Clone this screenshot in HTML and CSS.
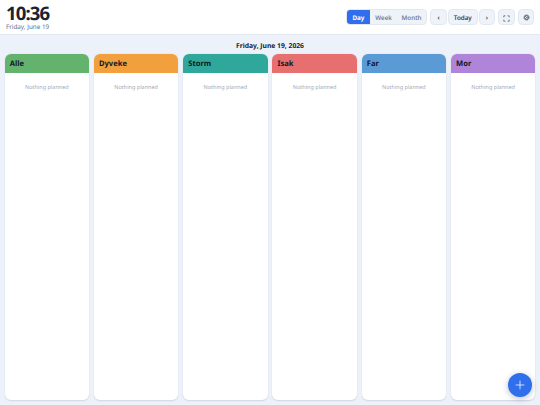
FILE: index.html
```html
<!DOCTYPE html>
<html lang="en">
<head>
<meta charset="utf-8">
<title>Family calendar</title>
<link rel="stylesheet" href="styles.css">
</head>
<body>
<header class="topbar">
  <div class="clock">
    <div class="time">10:36</div>
    <div class="date">Friday, June 19</div>
  </div>
  <div class="controls">
    <div class="segments">
      <button class="segment active">Day</button>
      <button class="segment week">Week</button>
      <button class="segment month">Month</button>
    </div>
    <div class="nav">
      <button class="btn arrow">‹</button>
      <button class="btn today">Today</button>
      <button class="btn arrow">›</button>
    </div>
    <button class="btn" aria-label="Full screen"><svg class="expand" viewBox="0 0 8 8"><path d="M.9 2.7V.9H2.7M5.3.9H7.1V2.7M7.1 5.3V7.1H5.3M2.7 7.1H.9V5.3"/></svg></button>
    <button class="btn" aria-label="Settings"><svg class="gear" viewBox="0 0 8 8"><circle class="teeth" cx="4" cy="4" r="3"/><circle class="ring" cx="4" cy="4" r="2.2"/><path d="M4 4L6 4M4 4L3 2.4M4 4L3 5.6"/></svg></button>
  </div>
</header>
<main class="board">
  <h1 class="day-title">Friday, June 19, 2026</h1>
  <div class="columns">
    <section class="column"><h2 class="name green">Alle</h2><p class="empty">Nothing planned</p></section>
    <section class="column"><h2 class="name orange">Dyveke</h2><p class="empty">Nothing planned</p></section>
    <section class="column"><h2 class="name teal">Storm</h2><p class="empty">Nothing planned</p></section>
    <section class="column"><h2 class="name red">Isak</h2><p class="empty">Nothing planned</p></section>
    <section class="column"><h2 class="name blue">Far</h2><p class="empty">Nothing planned</p></section>
    <section class="column"><h2 class="name purple">Mor</h2><p class="empty">Nothing planned</p></section>
  </div>
</main>
<button class="add" aria-label="Add event"><svg class="plus" viewBox="0 0 10 10"><path d="M5 .6V9.4M.6 5H9.4"/></svg></button>
</body>
</html>
```
FILE: styles.css
```css
* { box-sizing: border-box; }
body {
  margin: 0;
  height: 405px;
  display: flex;
  flex-direction: column;
  overflow: hidden;
  background: #edf1f9;
  color: #1a2233;
  font-family: "Noto Sans", sans-serif;
  text-rendering: geometricPrecision;
}
button { font-family: inherit; margin: 0; padding: 0; border: 0; text-rendering: inherit; }
.topbar {
  height: 34.6px;
  flex: none;
  display: flex;
  justify-content: space-between;
  align-items: flex-start;
  padding: 4px 5.8px 0 5.9px;
  background: #fff;
  border-bottom: 0.5px solid #e2e7f0;
}
.time {
  font-size: 18.56px;
  line-height: 19px;
  font-weight: 700;
  letter-spacing: -0.85px;
}
.date {
  font-size: 6.33px;
  line-height: 8.4px;
  color: #667085;
}
.controls { display: flex; align-items: center; gap: 3.4px; margin-top: 4.9px; }
.segments {
  display: flex;
  width: 81.2px;
  height: 15.6px;
  border: 0.5px solid #e2e7f0;
  border-radius: 4.2px;
  overflow: hidden;
  background: #eef2f9;
}
.segment {
  flex: 0 0 23.1px;
  background: transparent;
  font-size: 6.33px;
  font-weight: 500;
  color: #667085;
}
.week { flex-basis: 27px; }
.month { flex: 1; }
.active { background: #2f6fed; color: #fff; font-weight: 700; }
.nav { display: flex; gap: 1.3px; }
.btn {
  width: 16.2px;
  height: 16.4px;
  display: flex;
  align-items: center;
  justify-content: center;
  border: 0.5px solid #e2e7f0;
  border-radius: 4.2px;
  background: #eef2f9;
  color: #1a2233;
  font-size: 7.2px;
}
.arrow { padding-top: 1.4px; }
.today { width: 29.6px; font-size: 6.33px; font-weight: 500; }
.expand { width: 7px; height: 7px; margin-top: 2px; }
.expand path { fill: none; stroke: #4b5261; stroke-width: 0.8; }
.gear { width: 7px; height: 7px; }
.gear circle, .gear path { fill: none; stroke: #2b3344; }
.gear .teeth { stroke-width: 0.9; stroke-dasharray: 0.9 0.67; }
.gear .ring { stroke-width: 0.8; }
.gear path { stroke-width: 0.5; }
.board {
  flex: 1;
  display: flex;
  flex-direction: column;
  padding: 6.2px 4.6px 4.6px;
}
.day-title {
  margin: 0 0 3.1px;
  font-size: 6.75px;
  line-height: 10.4px;
  font-weight: 700;
  text-align: center;
}
.columns {
  flex: 1;
  display: grid;
  grid-template-columns: repeat(6, 1fr);
  gap: 4.8px;
}
.column {
  overflow: hidden;
  border-radius: 5.9px;
  background: #fff;
  box-shadow: 0 0.5px 1.5px rgba(20, 30, 60, 0.13);
}
.name {
  margin: 0;
  height: 18.8px;
  padding-left: 5.1px;
  font-size: 7.6px;
  line-height: 21px;
  font-weight: 700;
  color: #111827;
}
.green { background: #63b36f; }
.orange { background: #f2a03d; }
.teal { background: #2fa79b; }
.red { background: #e76f6f; }
.blue { background: #5b9bd5; }
.purple { background: #b085d9; }
.empty {
  margin: 10.3px 0 0;
  font-size: 5.5px;
  line-height: 8px;
  text-align: center;
  color: #a3a9b6;
}
.add {
  position: fixed;
  right: 7.6px;
  bottom: 7.6px;
  width: 24.6px;
  height: 24.6px;
  display: flex;
  align-items: center;
  justify-content: center;
  border-radius: 50%;
  background: #2f6fed;
  box-shadow: 0 1.5px 6px rgba(20, 30, 60, 0.28);
}
.plus { width: 10px; height: 10px; }
.plus path { fill: none; stroke: #fff; stroke-width: 0.75; }
```
